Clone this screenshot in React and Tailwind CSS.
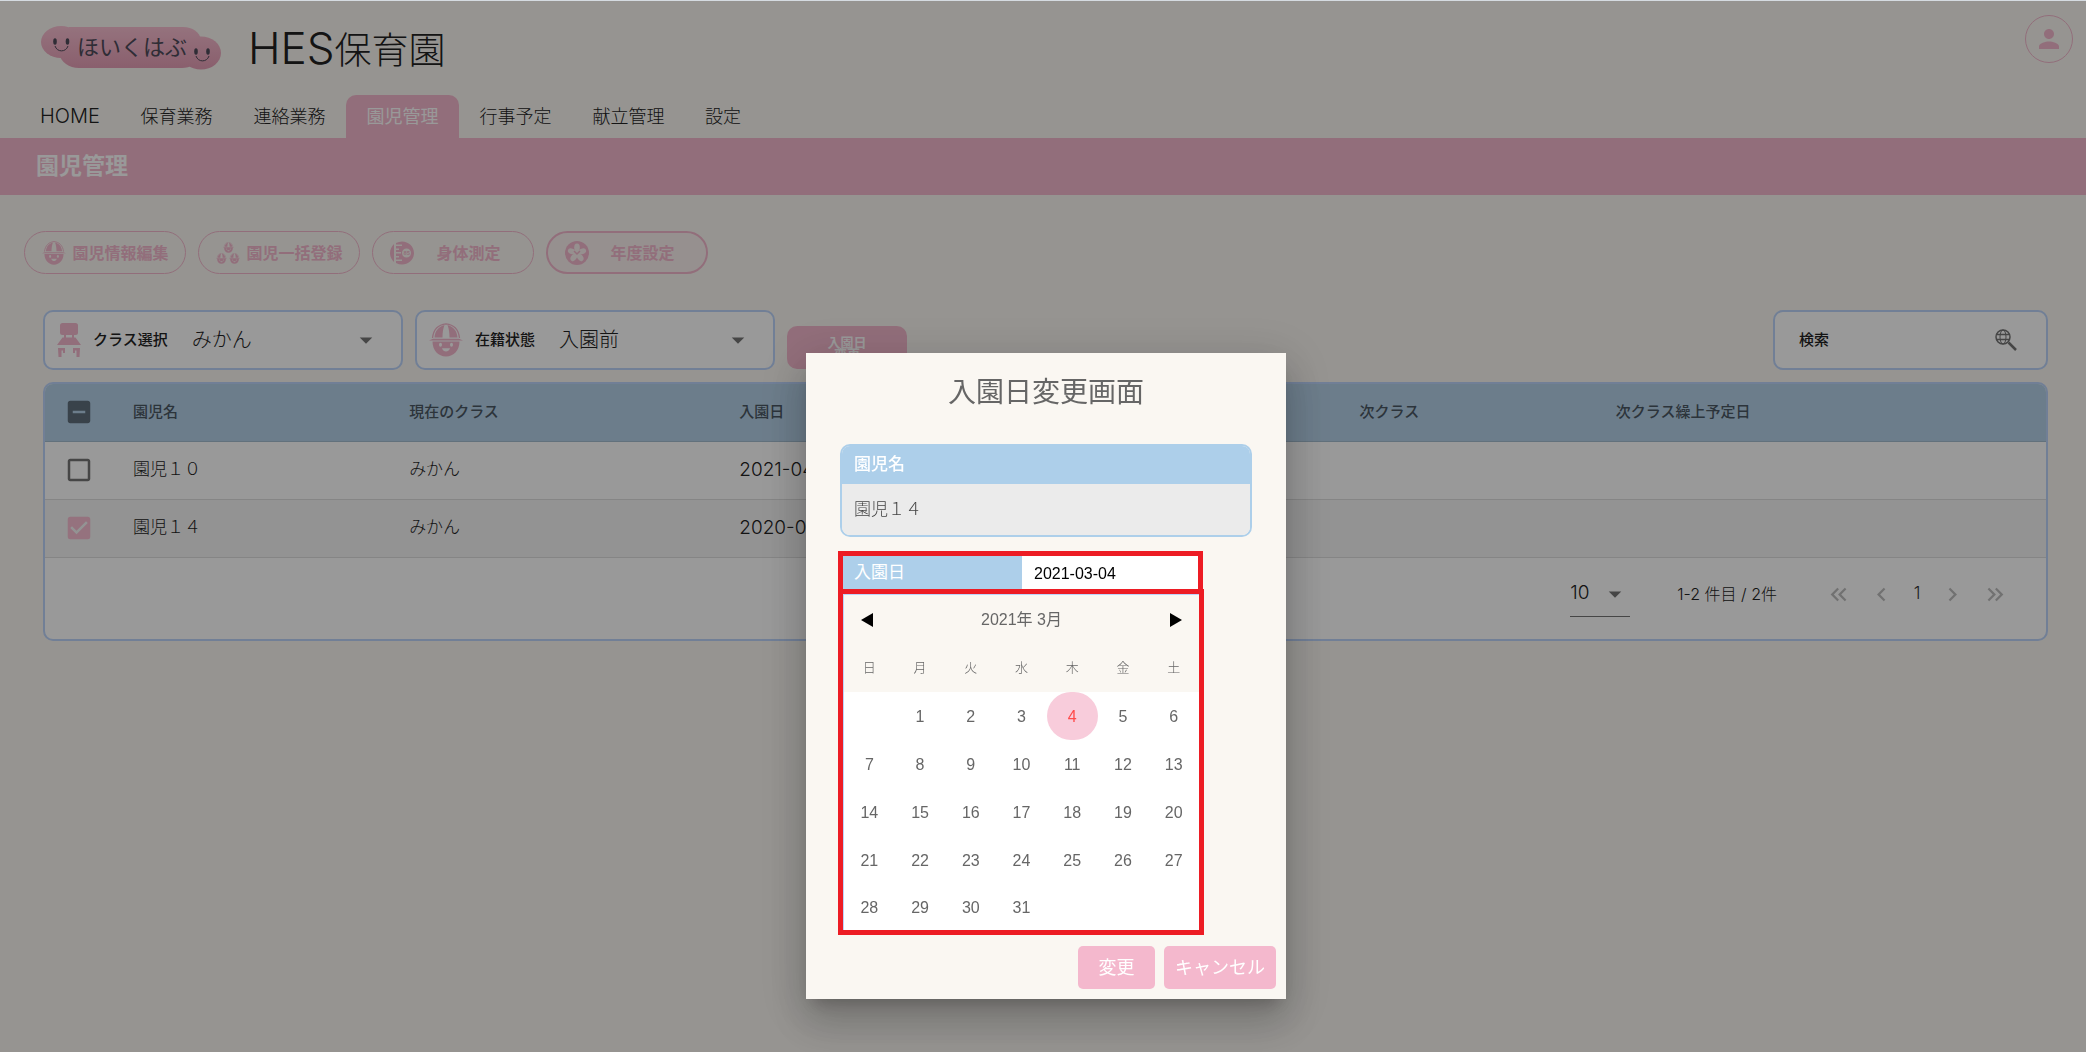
import React, { useState } from 'react';
import {
  MdArrowDropDown,
  MdCheckBox,
  MdCheckBoxOutlineBlank,
  MdChevronLeft,
  MdChevronRight,
  MdIndeterminateCheckBox,
  MdKeyboardDoubleArrowLeft,
  MdKeyboardDoubleArrowRight,
  MdPerson,
} from 'react-icons/md';

const NAV_ITEMS = ['保育業務', '連絡業務', '園児管理', '行事予定', '献立管理', '設定'];

const CHILDREN = [
  { id: 10, name: '園児１０', className: 'みかん', entryDate: '2021-04-01' },
  { id: 14, name: '園児１４', className: 'みかん', entryDate: '2020-04-01' },
];

const WEEKDAYS = ['日', '月', '火', '水', '木', '金', '土'];

function Logo() {
  return (
    <svg width="180" height="44" viewBox="0 0 180 44" role="img" aria-label="ほいくはぶ">
      <defs>
        <linearGradient id="logoPink" x1="0" y1="0" x2="0" y2="44" gradientUnits="userSpaceOnUse">
          <stop offset="0" stopColor="#f9c0d2" />
          <stop offset="1" stopColor="#e59db5" />
        </linearGradient>
      </defs>
      <g fill="url(#logoPink)">
        <ellipse cx="20" cy="16" rx="20" ry="16" />
        <path d="M28 1H142C152 1 158 6 160 13L150 40C146 42 142 42 138 42H38C28 42 20 36 18 28Z" />
        <ellipse cx="160" cy="27" rx="20" ry="16.5" />
      </g>
      <g fill="#4f4b5a">
        <ellipse cx="14" cy="15.500" rx="1.800" ry="3.200" />
        <ellipse cx="26.500" cy="15.500" rx="1.800" ry="3.200" />
        <ellipse cx="155" cy="25.500" rx="1.800" ry="3.200" />
        <ellipse cx="167" cy="25.500" rx="1.800" ry="3.200" />
      </g>
      <g fill="none" stroke="#4f4b5a" strokeWidth="1">
        <path d="M14 20C16 26.500 25 26.500 27 20" />
        <path d="M155 30C157 36.500 166 36.500 168 30" />
      </g>
      <text x="36" y="29" fontSize="22" fill="#4f4b5a">ほいくはぶ</text>
    </svg>
  );
}

function KidIcon({ size = 34 }) {
  return (
    <svg width={size} height={size} viewBox="0 0 34 34" fill="#f4b8cd" aria-hidden="true">
      <path d="M3.500 15C4.500 6 10 1.500 17 .8C24 1.500 29.500 6 30.500 15" fill="none" stroke="#f4b8cd" strokeWidth="1.300" />
      <path d="M5.500 14.500C6 8 9.500 3.500 15.500 2C14 6 13.500 10 13.500 14.500Z" />
      <path d="M28.500 14.500C28 8 24.500 3.500 18.500 2C20 6 20.500 10 20.500 14.500Z" />
      <path d="M0 17.500L4 15.800H30L34 17.500Z" />
      <path
        fillRule="evenodd"
        d="M3.500 18.500H30.500C30.500 27 25 33.500 17 33.500C9 33.500 3.500 27 3.500 18.500ZM11.500 19.800A1.500 2 0 1 0 11.500 23.800A1.500 2 0 1 0 11.500 19.800ZM22.500 19.800A1.500 2 0 1 0 22.500 23.800A1.500 2 0 1 0 22.500 19.800ZM13 25.200C14.500 29.500 19.500 29.500 21 25.200Z"
      />
    </svg>
  );
}

function KidsIcon() {
  return (
    <span className="flex w-6 flex-col items-center" aria-hidden="true">
      <KidIcon size={11} />
      <span className="flex gap-0.5">
        <KidIcon size={11} />
        <KidIcon size={11} />
      </span>
    </span>
  );
}

function MeasureIcon() {
  return (
    <svg width="24" height="24" viewBox="0 0 24 24" fill="#f4b8cd" aria-hidden="true">
      <path d="M4 3C1.500 5.500 0 8.500 0 12S1.500 18.500 4 21Z" />
      <path
        fillRule="evenodd"
        d="M6 2V3.500H12V5H6V7.500H9V9H6V11H11V12.500H6V15H9V16.500H6V18.500H12V20H6V22C8 23 10 23.500 12 23.500C18.500 23.500 24 18.500 24 12S18.500 .5 12 .5C10 .5 8 1 6 2ZM16.500 7.500A4.500 4.500 0 1 1 16.500 16.500A4.500 4.500 0 1 1 16.500 7.500Z"
      />
      <text x="13.500" y="14" fontSize="5" fontWeight="bold">85</text>
    </svg>
  );
}

function FlowerIcon() {
  return (
    <svg width="24" height="24" viewBox="0 0 24 24" aria-hidden="true">
      <circle cx="12" cy="12" r="12" fill="#f4b8cd" />
      <g fill="#faf1ef">
        {[0, 72, 144, 216, 288].map((deg) => (
          <ellipse key={deg} cx="12" cy="6.500" rx="2.800" ry="4" transform={`rotate(${deg} 12 12)`} />
        ))}
        <circle cx="12" cy="12" r="3" />
      </g>
      <path d="M9 10L12 13L15 10" fill="none" stroke="#f4b8cd" strokeWidth="1.500" />
    </svg>
  );
}

function ChairIcon() {
  return (
    <svg width="24" height="36" viewBox="0 0 24 36" fill="#f4b8cd" aria-hidden="true">
      <rect x="3" y="1" width="18" height="12" rx="2.500" />
      <path d="M7 13H9V15.500H15V13H17V15.500H18.500L24 23H0L5.500 15.500H7Z" />
      <path d="M1 26H8V31H6V28.500H4.500V35H1.500ZM23 26H16V31H18V28.500H19.500V35H22.500Z" />
    </svg>
  );
}

function GlobeSearchIcon() {
  return (
    <svg width="22" height="22" viewBox="0 0 22 22" fill="none" stroke="#757575" strokeWidth="1.500" aria-hidden="true">
      <circle cx="8" cy="8" r="7" />
      <ellipse cx="8" cy="8" rx="3" ry="7" strokeWidth="1" />
      <path d="M1.500 5.500H14.500M1.500 10.500H14.500" />
      <path d="M13.500 13.500L21 21" strokeWidth="2.500" />
    </svg>
  );
}

const ACTIONS = [
  { label: '園児情報編集', icon: <KidIcon size={24} /> },
  { label: '園児一括登録', icon: <KidsIcon /> },
  { label: '身体測定', icon: <MeasureIcon /> },
  { label: '年度設定', icon: <FlowerIcon />, active: true },
];

function FilterSelect({ id, label, icon, value }) {
  return (
    <div className="relative flex h-[60px] w-[360px] items-center gap-3 rounded-[10px] border-2 border-[#bcd4fb] bg-white pl-3">
      {icon}
      <label htmlFor={id} className="shrink-0 text-[15px] font-medium">{label}</label>
      <select id={id} className="h-full min-w-0 flex-1 appearance-none bg-transparent pl-3 text-[20px] font-light outline-none">
        <option>{value}</option>
      </select>
      <MdArrowDropDown size={30} className="pointer-events-none absolute right-5 text-[#757575]" />
    </div>
  );
}

function RowCheck({ label, state, onChange }) {
  return (
    <label className="flex cursor-pointer">
      <input type="checkbox" className="sr-only" aria-label={label} checked={state !== 'off'} onChange={onChange} />
      {state === 'on' && <MdCheckBox size={30} className="text-[#f9bfd3]" />}
      {state === 'off' && <MdCheckBoxOutlineBlank size={30} className="text-[#757575]" />}
      {state === 'some' && <MdIndeterminateCheckBox size={30} className="text-[#5f6f7c]" />}
    </label>
  );
}

function ChildTable() {
  const [selected, setSelected] = useState([14]);
  const toggle = (id) =>
    setSelected(selected.includes(id) ? selected.filter((s) => s !== id) : [...selected, id]);

  let allState = 'some';
  if (selected.length === 0) allState = 'off';
  if (selected.length === CHILDREN.length) allState = 'on';

  return (
    <div className="mt-3 overflow-hidden rounded-[10px] border-2 border-[#bcd4fb] bg-white">
      <table className="w-full table-fixed border-collapse text-left">
        <colgroup>
          <col className="w-[72px]" />
          <col className="w-[13.8%]" />
          <col className="w-[16.5%]" />
          <col className="w-[31%]" />
          <col className="w-[12.8%]" />
          <col />
        </colgroup>
        <thead>
          <tr className="h-[57px] border-b border-[#a3bccf] bg-[#b5d1e8] text-[15px] text-[#4a5763]">
            <th className="pl-[19px]">
              <RowCheck
                label="すべて選択"
                state={allState}
                onChange={() => setSelected(allState === 'on' ? [] : CHILDREN.map((c) => c.id))}
              />
            </th>
            <th className="px-4 font-medium">園児名</th>
            <th className="px-4 font-medium">現在のクラス</th>
            <th className="px-4 font-medium">入園日</th>
            <th className="px-4 font-medium">次クラス</th>
            <th className="px-4 font-medium">次クラス繰上予定日</th>
          </tr>
        </thead>
        <tbody className="text-[17px] font-light">
          {CHILDREN.map((child) => {
            const on = selected.includes(child.id);
            return (
              <tr key={child.id} className={`h-[58px] border-b border-[#dedede] ${on ? 'bg-[#f5f5f5]' : ''}`}>
                <td className="pl-[19px]">
                  <RowCheck label={child.name} state={on ? 'on' : 'off'} onChange={() => toggle(child.id)} />
                </td>
                <td className="px-4">{child.name}</td>
                <td className="px-4">{child.className}</td>
                <td className="px-4 text-[19px]">{child.entryDate}</td>
                <td className="px-4" />
                <td className="px-4" />
              </tr>
            );
          })}
        </tbody>
      </table>

      {/* Pagination */}
      <div className="flex h-[81px] items-center justify-end pr-[37px] pb-2 text-base font-light">
        <div className="relative mr-[47px] flex h-[46px] w-[60px] items-center border-b border-[#757575]">
          <select aria-label="表示件数" className="h-full w-full appearance-none bg-transparent text-[19px] font-light outline-none">
            <option>10</option>
          </select>
          <MdArrowDropDown size={30} className="pointer-events-none absolute right-0 text-[#757575]" />
        </div>
        <span className="mr-12">1-2 件目 / 2件</span>
        <div className="flex items-center gap-4 text-[#bdbdbd]">
          <button aria-label="最初のページ"><MdKeyboardDoubleArrowLeft size={27} /></button>
          <button aria-label="前のページ"><MdChevronLeft size={27} /></button>
          <span className="w-3 text-center text-[17px] text-[#333]">1</span>
          <button aria-label="次のページ"><MdChevronRight size={27} /></button>
          <button aria-label="最後のページ"><MdKeyboardDoubleArrowRight size={27} /></button>
        </div>
      </div>
    </div>
  );
}

function Calendar({ day, onSelect }) {
  // 2021-03-01 is a Monday
  const cells = [null, ...Array.from({ length: 31 }, (_, i) => i + 1)];

  return (
    <div className="w-[366px] border-5 border-[#ed1c24]">
      <div className="border-t border-l border-[#bcd4fb] bg-white text-[#666]">
        <div className="bg-[#faf7f2]">
          <div className="flex h-[49px] items-center justify-between px-[17px]">
            <button aria-label="前の月">
              <svg width="12" height="14" viewBox="0 0 12 14"><path d="M12 0V14L0 7Z" /></svg>
            </button>
            <span>2021年 3月</span>
            <button aria-label="次の月">
              <svg width="12" height="14" viewBox="0 0 12 14"><path d="M0 0V14L12 7Z" /></svg>
            </button>
          </div>
          <div className="grid h-12 grid-cols-7 items-center text-center text-[13px] font-light">
            {WEEKDAYS.map((w) => <span key={w}>{w}</span>)}
          </div>
        </div>
        <div className="grid grid-cols-7">
          {cells.map((d, i) =>
            d === null ? (
              <span key="blank" />
            ) : (
              <button
                key={d}
                onClick={() => onSelect(d)}
                className={`${i >= 28 ? 'h-[46px]' : 'h-12'} rounded-[24px] pt-0.5 ${d === day ? 'bg-[#f8ccdb] text-[#ff4a4a]' : ''}`}
              >
                {d}
              </button>
            )
          )}
        </div>
      </div>
    </div>
  );
}

function EntryDateDialog() {
  const [day, setDay] = useState(4);

  return (
    <div className="fixed inset-0 flex items-end justify-center border-t border-[#d5dbe1] bg-black/40 pb-[53px] pl-[6px]">
      <div
        role="dialog"
        aria-labelledby="dialog-title"
        className="w-[480px] bg-[#faf7f2] shadow-[0_11px_15px_-7px_rgba(0,0,0,0.2),0_24px_38px_3px_rgba(0,0,0,0.14),0_9px_46px_8px_rgba(0,0,0,0.12)]"
      >
        <h2 id="dialog-title" className="flex h-[91px] justify-center pt-[18px] text-[28px] leading-[42px] text-[#666]">
          入園日変更画面
        </h2>

        <div className="mx-[34px] overflow-hidden rounded-[10px] border-2 border-[#adcfea]">
          <div className="flex h-[38px] items-center bg-[#adcfea] px-3 text-[17px] font-medium text-white">園児名</div>
          <div className="flex h-[51px] items-center bg-[#ebebeb] px-3 text-[17px] font-light text-[#444]">園児１４</div>
        </div>

        <div className="mt-[14px] ml-8 font-[Liberation_Sans,Noto_Sans_CJK_JP,sans-serif] text-base">
          <div className="flex h-[38px] w-[365px] border-5 border-b-0 border-[#ed1c24] bg-white">
            <label htmlFor="entry-date" className="flex w-[179px] items-center bg-[#adcfea] pl-[11px] text-[17px] text-white">
              入園日
            </label>
            <input
              id="entry-date"
              readOnly
              value={`2021-03-${String(day).padStart(2, '0')}`}
              className="min-w-0 flex-1 px-3 pt-0.5 text-black outline-none"
            />
          </div>
          <Calendar day={day} onSelect={setDay} />
        </div>

        <div className="flex justify-end gap-[9px] px-[10px] pt-[11px] pb-[10px] text-lg text-white">
          <button className="h-[43px] w-[77px] rounded-[5px] bg-[#f4b8cd]">変更</button>
          <button className="h-[43px] w-[112px] rounded-[5px] bg-[#f4b8cd]">キャンセル</button>
        </div>
      </div>
    </div>
  );
}

export default function App() {
  return (
    <div className="min-h-screen bg-[#faf7f2] font-[Inter,Noto_Sans_CJK_JP,sans-serif] text-[#222]">
      <header className="flex h-[95px] items-start pr-[13px] pl-[41px]">
        <a href="#home" className="mt-[26px]"><Logo /></a>
        <h1 className="mt-[22px] ml-[27px] text-[37px] leading-[52px] font-light">
          <span className="text-[44px]">HES</span>保育園
        </h1>
        <button
          aria-label="アカウント"
          className="mt-[15px] ml-auto flex h-12 w-12 items-center justify-center rounded-full border border-[#f4b8cd]"
        >
          <MdPerson size={30} className="text-[#f4b8cd]" />
        </button>
      </header>

      <nav className="flex pl-5 text-lg font-light">
        <a href="#home" className="flex h-[43px] w-[100px] items-center pl-5 text-[20px]">HOME</a>
        {NAV_ITEMS.map((item) => (
          <a
            key={item}
            href="#menu"
            className={`flex h-[43px] w-[113px] items-center justify-center rounded-t-[10px] last:w-[76px] ${
              item === '園児管理' ? 'bg-[#f4b8cd] font-normal text-white' : ''
            }`}
          >
            {item}
          </a>
        ))}
      </nav>

      <div className="flex h-[57px] items-center bg-[#f4b8cd] px-9">
        <h2 className="text-[23px] font-bold text-white">園児管理</h2>
      </div>

      <div className="mt-9 flex gap-3 px-6">
        {ACTIONS.map(({ label, icon, active }) => (
          <button
            key={label}
            className={`flex h-[43px] w-[162px] items-center rounded-full border-[#f4b8cd] pr-[10px] pl-[17px] text-base font-bold text-[#f4b8cd] ${
              active ? 'border-2 bg-[#faf1ef]' : 'border'
            }`}
          >
            {icon}
            <span className="flex-1 text-center whitespace-nowrap">{label}</span>
          </button>
        ))}
      </div>

      <main className="mt-9 pr-[38px] pl-[43px]">
        <div className="flex items-start gap-3">
          <FilterSelect id="class-select" label="クラス選択" icon={<ChairIcon />} value="みかん" />
          <FilterSelect id="status-select" label="在籍状態" icon={<KidIcon />} value="入園前" />
          <button className="mt-4 h-[43px] w-[120px] rounded-[10px] bg-[#f4b8cd] text-[13px] leading-3 font-bold text-white">
            入園日<br />変更
          </button>
          <div className="ml-auto flex h-[60px] w-[275px] items-center rounded-[10px] border-2 border-[#bcd4fb] bg-white pr-[29px] pl-6">
            <label htmlFor="search" className="shrink-0 text-[15px] font-medium">検索</label>
            <input id="search" className="h-full min-w-0 flex-1 px-3 outline-none" />
            <button aria-label="検索する"><GlobeSearchIcon /></button>
          </div>
        </div>

        <ChildTable />
      </main>

      <EntryDateDialog />
    </div>
  );
}
